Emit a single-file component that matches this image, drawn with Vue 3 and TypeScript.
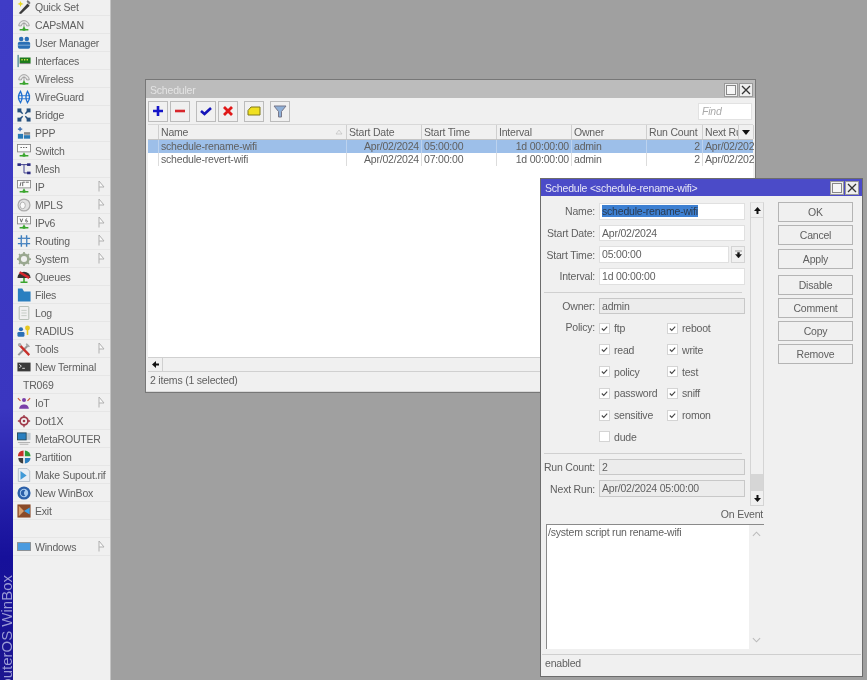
<script setup lang="ts">
interface MenuItem { label: string; icon: string; sub?: boolean; inset?: boolean }

const net = '<path d="M8 10v4M3 13.500h10" stroke="#3aa52e" stroke-width="1.600" fill="none"/><path d="M6.500 11.500h3v3h-3z" fill="#3aa52e"/>'

const icons: Record<string, string> = {
  quick: '<path d="M2 15 12 4l2.500 2.500L4.500 16z" fill="#3c3c3c"/><path d="M12 0l2 1.500 1.500 2L14 5l-3-3z" fill="#777"/><path d="M4 1l1 2.500 2.500 1L5 5.500 4 8 3 5.500.5 4.500 3 3.500z" fill="#e8d820"/>',
  caps: '<path d="M2 9a6 6 0 0 1 12 0H11a3 3 0 0 0-6 0z" fill="#e6e6e6" stroke="#9a9a9a"/><path d="M8 5v6" stroke="#9a9a9a"/>' + net,
  user: '<circle cx="4.800" cy="3.500" r="2.600" fill="#2a6fb5"/><circle cx="11.200" cy="3.500" r="2.600" fill="#2a6fb5"/><rect x="1" y="6.500" width="14" height="8" rx="2" fill="#2a6fb5"/><path d="M1 10.500h14" stroke="#8fb5dc"/>',
  ifaces: '<rect x="0.500" y="1" width="1.600" height="14" fill="#5a8f9a"/><rect x="3" y="4" width="12.500" height="6.500" fill="#1c7a1c"/><path d="M5 6.500h1.500M8 6.500h1.500M11 6.500h1.500" stroke="#d9e84a" stroke-width="1.600"/><rect x="3" y="10.500" width="12.500" height="1" fill="#777"/>',
  wg: '<path d="M4 1.500C.8 6 .8 10 4 14.500 6.500 10 6.500 6 4 1.500zM12 1.500C9.500 6 9.500 10 12 14.500 15.200 10 15.200 6 12 1.500z" fill="none" stroke="#1f6fd0" stroke-width="1.500"/><path d="M1 6.500h14M1 10h14" stroke="#1f6fd0" stroke-width="1"/>',
  bridge: '<path d="M3.500 3.500 6.500 6.500M12.500 3.500 9.500 6.500M3.500 12.500 6.500 9.500M12.500 12.500 9.500 9.500" stroke="#26507e" stroke-width="1.600"/><rect x="0.500" y="0.500" width="4.500" height="4.500" fill="#26507e"/><rect x="11" y="0.500" width="4.500" height="4.500" fill="#26507e"/><rect x="0.500" y="11" width="4.500" height="4.500" fill="#26507e"/><rect x="11" y="11" width="4.500" height="4.500" fill="#26507e"/>',
  ppp: '<path d="M3.500 1v5M1 3.500h5" stroke="#2a5fa8" stroke-width="1.300"/><rect x="1" y="9" width="6" height="5.500" fill="#2a7ab5"/><rect x="8" y="7" width="7" height="3" fill="#8a8a8a"/><rect x="8" y="10.500" width="7" height="4" fill="#2a7ab5"/>',
  sw: '<rect x="0.500" y="0.500" width="15" height="8.500" fill="#fbfbfb" stroke="#888"/><path d="M4 4h1.500M7 4h1.500M10 4h1.500" stroke="#555" stroke-width="1.200"/>' + net,
  mesh: '<rect x="0.500" y="1.500" width="4" height="3" fill="#2a2a80"/><rect x="11.500" y="1.500" width="4" height="3" fill="#2a2a80"/><rect x="11.500" y="11" width="4" height="3" fill="#2a2a80"/><path d="M4 3h8M8 3v9.500h4" stroke="#2a2a80" fill="none"/>',
  ip: '<rect x="0.500" y="0.500" width="15" height="8.500" fill="#fbfbfb" stroke="#888"/><path d="M3.500 7 4.500 2.500M6.500 2.500H9M6.500 7V2.500M10 2.500h3.500" stroke="#555"/>' + net,
  mpls: '<circle cx="8" cy="8" r="6.800" fill="#e2e2e2" stroke="#aaa" stroke-width="1.400"/><ellipse cx="6.500" cy="8.500" rx="3" ry="3.800" fill="#fafafa" stroke="#aaa"/>',
  ipv6: '<rect x="0.500" y="0.500" width="15" height="8.500" fill="#fbfbfb" stroke="#888"/><path d="M3.500 3l1.500 4L6.500 3M11.500 3C9.500 3 9.500 7 11 7s1.500-2-.5-2" stroke="#555" fill="none"/>' + net,
  routing: '<path d="M1 5h14M1 11h14M5 1.500v13M11 1.500v13" stroke="#3d7dbd" stroke-width="1.600" fill="none"/><path d="M5 5h6v6H5z" fill="#f0f0f0" stroke="#3d7dbd"/>',
  system: '<circle cx="8" cy="8" r="5" fill="none" stroke="#9aa890" stroke-width="3"/><path d="M8 0v3M8 13v3M0 8h3M13 8h3M2.300 2.300l2 2M11.700 11.700l2 2M13.700 2.300l-2 2M4.300 11.700l-2 2" stroke="#9aa890" stroke-width="2"/>',
  queues: '<path d="M0.500 9a7.500 7 0 0 1 15 0z" fill="#333"/><path d="M3 2.500l11 6.500" stroke="#d8262c" stroke-width="2.800"/><path d="M8 9v5M4 14h8" stroke="#3aa52e" stroke-width="1.800"/>',
  files: '<path d="M1 0.500h5l2 3.500h7.500v11.500H1z" fill="#2a7fc0"/>',
  log: '<rect x="2.500" y="0.500" width="11" height="15" rx="1" fill="#f0f0f0" stroke="#aab5aa"/><path d="M5 5h6M5 8h6M5 11h6" stroke="#c0c8c0"/>',
  radius: '<circle cx="4.500" cy="6" r="2.400" fill="#2a6fb5"/><rect x="0.500" y="9" width="8" height="5.500" rx="1.500" fill="#2a6fb5"/><circle cx="12" cy="4.500" r="2.800" fill="#e8c820"/><path d="M12 6v6.500" stroke="#e8c820" stroke-width="1.800"/>',
  tools: '<path d="M1.500 15 13 3.500" stroke="#999" stroke-width="2.400"/><path d="M2.500 3 14 15" stroke="#c8302a" stroke-width="2.600"/><path d="M11 1l4 4-2 1-3-3z" fill="#aaa"/><circle cx="3" cy="3" r="2" fill="#aaa"/>',
  term: '<rect x="0.500" y="3" width="15" height="10" fill="#3a3a3a"/><path d="M2.500 5l2.500 2-2.500 2M6 9.500h3" stroke="#eee" fill="none"/>',
  iot: '<circle cx="8" cy="4.500" r="2.300" fill="#7a3fa8"/><path d="M2.500 14.500c0-6.500 11-6.500 11 0z" fill="#7a3fa8"/><path d="M1 2.500 4 5.500M15 2.500 12 5.500" stroke="#c85a3a" stroke-width="1.400"/>',
  dot1x: '<circle cx="8" cy="8" r="4.500" fill="none" stroke="#a03a4a" stroke-width="2"/><circle cx="8" cy="8" r="1.500" fill="#a03a4a"/><path d="M1 8h3M12 8h3M8 1v3M8 12v3" stroke="#a03a4a" stroke-width="1.500"/>',
  meta: '<rect x="0.500" y="1" width="10" height="8" fill="#2a7fc0" stroke="#245"/><rect x="11.500" y="1" width="4" height="8" fill="#c0c8d0"/><path d="M1 12h14M3 14h10" stroke="#aaa"/>',
  part: '<path d="M7.500 0.500V7H1A7 7 0 0 1 7.500 0.500z" fill="#c8302a"/><path d="M9 0.500A6.800 6.800 0 0 1 15.500 7H9z" fill="#2f9a3a"/><path d="M7 9v6.500A6.800 6.800 0 0 1 1.500 9z" fill="#3d3d3d"/><path d="M9 9h6.500A6.800 6.800 0 0 1 9 15.500z" fill="#2a7fc0"/>',
  sup: '<path d="M1.500 0.500h10l3 3v12h-13z" fill="#e8eef4" stroke="#b0bcc6"/><path d="M4 3.500l7 5-7 5z" fill="#3f9ad8"/>',
  win: '<circle cx="8" cy="8" r="7.500" fill="#2a5fa8"/><circle cx="8" cy="8" r="4.800" fill="#a8ccf0"/><path d="M9.500 4.800a3.600 3.600 0 1 0 0 6.400 4.500 4.500 0 0 1 0-6.400z" fill="#2a5fa8"/>',
  exit: '<rect x="0.500" y="0.500" width="15" height="15" fill="#8a4a28"/><path d="M2 2l6 6-6 6" fill="#d8a070"/><path d="M14.500 4v8L8 8z" fill="#3aa0e8"/>',
  windows: '<rect x="0.500" y="3" width="15" height="9" fill="#4a9be0" stroke="#8a8a8a"/>'
}
icons.wireless = icons.caps

const menu: MenuItem[] = [
  { label: 'Quick Set', icon: 'quick' },
  { label: 'CAPsMAN', icon: 'caps' },
  { label: 'User Manager', icon: 'user' },
  { label: 'Interfaces', icon: 'ifaces' },
  { label: 'Wireless', icon: 'wireless' },
  { label: 'WireGuard', icon: 'wg' },
  { label: 'Bridge', icon: 'bridge' },
  { label: 'PPP', icon: 'ppp' },
  { label: 'Switch', icon: 'sw' },
  { label: 'Mesh', icon: 'mesh' },
  { label: 'IP', icon: 'ip', sub: true },
  { label: 'MPLS', icon: 'mpls', sub: true },
  { label: 'IPv6', icon: 'ipv6', sub: true },
  { label: 'Routing', icon: 'routing', sub: true },
  { label: 'System', icon: 'system', sub: true },
  { label: 'Queues', icon: 'queues' },
  { label: 'Files', icon: 'files' },
  { label: 'Log', icon: 'log' },
  { label: 'RADIUS', icon: 'radius' },
  { label: 'Tools', icon: 'tools', sub: true },
  { label: 'New Terminal', icon: 'term' },
  { label: 'TR069', icon: '', inset: true },
  { label: 'IoT', icon: 'iot', sub: true },
  { label: 'Dot1X', icon: 'dot1x' },
  { label: 'MetaROUTER', icon: 'meta' },
  { label: 'Partition', icon: 'part' },
  { label: 'Make Supout.rif', icon: 'sup' },
  { label: 'New WinBox', icon: 'win' },
  { label: 'Exit', icon: 'exit' },
  { label: '', icon: '' },
  { label: 'Windows', icon: 'windows', sub: true }
]

const rows = [
  { name: 'schedule-rename-wifi', time: '05:00:00', selected: true },
  { name: 'schedule-revert-wifi', time: '07:00:00', selected: false }
]

const policies = [
  { a: 'ftp', b: 'reboot', ac: true },
  { a: 'read', b: 'write', ac: true },
  { a: 'policy', b: 'test', ac: true },
  { a: 'password', b: 'sniff', ac: true },
  { a: 'sensitive', b: 'romon', ac: true },
  { a: 'dude', b: '', ac: false }
]

const actionsA = ['OK', 'Cancel', 'Apply']
const actionsB = ['Disable', 'Comment', 'Copy', 'Remove']
</script>

<template>
  <div class="screen">
    <aside class="strip"><span class="brand">RouterOS WinBox</span></aside>
    <nav class="menu">
      <div v-for="(m, i) in menu" :key="i" class="mrow">
        <svg v-if="m.icon" class="micon" viewBox="0 0 16 16" v-html="icons[m.icon]"></svg>
        <span v-else class="micon"></span>
        <span class="mlabel" :class="{ inset: m.inset }">{{ m.label }}</span>
        <svg v-if="m.sub" class="flag" viewBox="0 0 7 12"><path d="M1 11.500V1l5 6H1" fill="#fafafa" stroke="#b0b0b0" /></svg>
      </div>
    </nav>

    <section class="desk">
      <div class="win sched">
        <header class="tbar idle">
          <span>Scheduler</span>
          <span class="wbtns">
            <i class="wbtn"><b class="sq"></b></i>
            <i class="wbtn"><svg viewBox="0 0 10 10"><path d="M1 1l8 8M9 1l-8 8" stroke="#333" stroke-width="1.300" /></svg></i>
          </span>
        </header>
        <div class="tools">
          <button class="tb"><svg viewBox="0 0 14 14"><path d="M7 2v10M2 7h10" stroke="#1414c8" stroke-width="2.600" /></svg></button>
          <button class="tb"><svg viewBox="0 0 14 14"><path d="M2 7h10" stroke="#d8262c" stroke-width="2.600" /></svg></button>
          <button class="tb gap"><svg viewBox="0 0 14 14"><path d="M2 7l3.500 3L12 4" fill="none" stroke="#1414b8" stroke-width="2.600" /></svg></button>
          <button class="tb"><svg viewBox="0 0 14 14"><path d="M3 3l8 8M11 3l-8 8" stroke="#e01818" stroke-width="2.800" /></svg></button>
          <button class="tb gap"><svg viewBox="0 0 14 14"><path d="M1 11V6.500L4 3h9v8z" fill="#f0e020" stroke="#807818" /></svg></button>
          <button class="tb gap"><svg viewBox="0 0 14 14"><path d="M1 2h12L8.500 7.500V13h-3V7.500z" fill="#8fb0d8" stroke="#778" /></svg></button>
          <span class="find">Find</span>
        </div>
        <div class="table">
          <div class="trow head">
            <span class="c"></span>
            <span class="c name">Name<svg class="sort" viewBox="0 0 8 6"><path d="M4 1 7 5H1z" fill="#eee" stroke="#bbb" stroke-width=".6" /></svg></span>
            <span class="c">Start Date</span>
            <span class="c">Start Time</span>
            <span class="c">Interval</span>
            <span class="c">Owner</span>
            <span class="c">Run Count</span>
            <span class="c clip">Next Run</span>
            <span class="c drop"><svg viewBox="0 0 8 5"><path d="M0 0h8L4 5z" fill="#111" /></svg></span>
          </div>
          <div v-for="r in rows" :key="r.name" class="trow" :class="{ sel: r.selected }">
            <span class="c"></span>
            <span class="c">{{ r.name }}</span>
            <span class="c right">Apr/02/2024</span>
            <span class="c">{{ r.time }}</span>
            <span class="c right">1d 00:00:00</span>
            <span class="c">admin</span>
            <span class="c right">2</span>
            <span class="c clip span2">Apr/02/2024 05:00:00</span>
          </div>
          <div class="tfill"></div>
          <div class="hscroll">
            <span class="arrowbox"><svg viewBox="0 0 9 9"><path d="M1 4.500 5 1v2.500h3v2H5V8z" fill="#111" /></svg></span>
          </div>
        </div>
        <footer class="status">2 items (1 selected)</footer>
      </div>

      <div class="win dialog">
        <header class="tbar active">
          <span>Schedule &lt;schedule-rename-wifi&gt;</span>
          <span class="wbtns">
            <i class="wbtn"><b class="sq"></b></i>
            <i class="wbtn"><svg viewBox="0 0 10 10"><path d="M1 1l8 8M9 1l-8 8" stroke="#333" stroke-width="1.300" /></svg></i>
          </span>
        </header>
        <div class="dbody">
          <div class="dleft">
            <div class="upper">
              <div class="form">
                <label class="frow"><span class="lab">Name:</span><span class="inp"><em class="hl">schedule-rename-wifi</em></span></label>
                <label class="frow"><span class="lab">Start Date:</span><span class="inp">Apr/02/2024</span></label>
                <label class="frow"><span class="lab">Start Time:</span><span class="inp short">05:00:00</span><span class="spin"><svg viewBox="0 0 9 9"><path d="M1 1h7M4.500 8 1.500 4.500H3.500V2.500h2v2h2z" fill="#111" stroke="#111" stroke-width=".4" /></svg></span></label>
                <label class="frow"><span class="lab">Interval:</span><span class="inp">1d 00:00:00</span></label>
                <hr class="sep first" />
                <label class="frow"><span class="lab">Owner:</span><span class="inp ro">admin</span></label>
                <div class="policy">
                  <span class="lab plab">Policy:</span>
                  <div class="pgrid">
                    <template v-for="p in policies" :key="p.a">
                      <span class="chk">
                        <i class="box"><svg v-if="p.ac" viewBox="0 0 10 10"><path d="M2 5l2.200 2.200L8 3" fill="none" stroke="#444" stroke-width="1.200" /></svg></i>{{ p.a }}
                      </span>
                      <span v-if="p.b" class="chk">
                        <i class="box"><svg viewBox="0 0 10 10"><path d="M2 5l2.200 2.200L8 3" fill="none" stroke="#444" stroke-width="1.200" /></svg></i>{{ p.b }}
                      </span>
                      <span v-else></span>
                    </template>
                  </div>
                </div>
                <hr class="sep second" />
                <label class="frow"><span class="lab">Run Count:</span><span class="inp ro">2</span></label>
                <label class="frow"><span class="lab">Next Run:</span><span class="inp ro">Apr/02/2024 05:00:00</span></label>
              </div>
              <div class="vscroll">
                <span class="vend"><svg viewBox="0 0 9 9"><path d="M4.500 1 8 5H5.500v3h-2V5H1z" fill="#111" /></svg></span>
                <span class="vtrack"></span>
                <span class="vthumb"></span>
                <span class="vend bottom"><svg viewBox="0 0 9 9"><path d="M4.500 8 8 4H5.500V1h-2v3H1z" fill="#111" /></svg></span>
              </div>
            </div>
            <div class="onevent">On Event</div>
            <div class="editor">
              <div class="code">/system script run rename-wifi</div>
              <div class="edscroll">
                <svg viewBox="0 0 10 6"><path d="M1 5l4-4 4 4" fill="none" stroke="#bbb" stroke-width="1.200" /></svg>
                <svg viewBox="0 0 10 6"><path d="M1 1l4 4 4-4" fill="none" stroke="#bbb" stroke-width="1.200" /></svg>
              </div>
            </div>
          </div>
          <div class="dright">
            <div class="agroup">
              <button v-for="a in actionsA" :key="a" class="act">{{ a }}</button>
            </div>
            <div class="agroup">
              <button v-for="a in actionsB" :key="a" class="act">{{ a }}</button>
            </div>
          </div>
        </div>
        <footer class="dstatus"><span>enabled</span></footer>
      </div>
    </section>
  </div>
</template>

<style scoped>
.screen {
  width: 867px;
  height: 680px;
  display: flex;
  overflow: hidden;
  position: relative;
  background: #a0a0a0;
  font: 10.500px "Liberation Sans", Arial, sans-serif;
  letter-spacing: -0.2px;
  color: #606060;
  filter: blur(0.6px);
}
.strip {
  width: 13px;
  flex: none;
  position: relative;
  overflow: hidden;
  background: linear-gradient(180deg, #3f3cc6 0%, #3a36c0 60%, #16109a 82%, #1c1690 100%);
}
.brand {
  position: absolute;
  left: -1px;
  bottom: -18px;
  writing-mode: vertical-rl;
  transform: rotate(180deg);
  font-size: 15px;
  line-height: 15px;
  letter-spacing: 0;
  color: #9b9bd6;
  white-space: nowrap;
}
.menu {
  width: 97px;
  flex: none;
  background: #f0f0f0;
  border-right: 1px solid #c4c4c4;
  margin-top: -2px;
  height: 682px;
}
.mrow {
  height: 18px;
  box-sizing: border-box;
  border-bottom: 1px solid #e6e6e6;
  display: flex;
  align-items: center;
  padding-left: 4px;
  position: relative;
}
.micon { width: 14px; height: 14px; flex: none; }
.mlabel { margin-left: 4px; white-space: nowrap; }
.mlabel.inset { margin-left: -8px; }
.flag { position: absolute; left: 85px; top: 2px; width: 7px; height: 12px; }
.desk { flex: 1; position: relative; }

.win {
  position: absolute;
  box-sizing: border-box;
  border: 1px solid #777;
  background: #f0f0f0;
  display: flex;
  flex-direction: column;
}
.sched { left: 34px; top: 79px; width: 611px; height: 314px; }
.dialog { left: 429px; top: 178px; width: 323px; height: 499px; border-color: #6c6c6c; }
.tbar {
  height: 17px;
  flex: none;
  display: flex;
  align-items: center;
  justify-content: space-between;
  padding: 0 2px 0 4px;
}
.sched .tbar { height: 18px; padding-top: 1px; box-sizing: border-box; }
.dialog .tbar { padding-right: 3px; }
.idle { background: #bcbcbc; color: #e4e4e4; }
.active { background: #4b4bc8; color: #e6e6f6; }
.wbtns { display: flex; gap: 1px; }
.wbtn {
  width: 14px;
  height: 14px;
  box-sizing: border-box;
  background: #eee;
  border: 1px solid #999;
  display: flex;
  align-items: center;
  justify-content: center;
}
.wbtn svg { width: 10px; height: 10px; }
.sq { width: 10px; height: 10px; box-sizing: border-box; border: 1px solid #888; background: #f6f6f6; }

.tools {
  height: 26px;
  flex: none;
  display: flex;
  align-items: center;
  padding: 0 3px 0 2px;
  gap: 2px;
}
.tb {
  width: 20px;
  height: 21px;
  padding: 0;
  box-sizing: border-box;
  border: 1px solid #bcbcbc;
  background: #f0f0f0;
  display: flex;
  align-items: center;
  justify-content: center;
}
.tb svg { width: 14px; height: 14px; }
.tb.gap { margin-left: 4px; }
.find {
  margin-left: auto;
  width: 54px;
  height: 17px;
  line-height: 15px;
  box-sizing: border-box;
  padding-left: 3px;
  background: #fff;
  border: 1px solid #e2e2e2;
  font-style: italic;
  color: #aaa;
}
.table {
  flex: 1;
  display: flex;
  flex-direction: column;
  margin: 0 2px;
  background: #fff;
  min-height: 0;
}
.trow {
  display: grid;
  grid-template-columns: 11px 188px 75px 75px 75px 75px 56px 36px 15px;
  height: 13px;
  line-height: 13px;
  flex: none;
  background: #fff;
}
.trow.head {
  height: 16px;
  line-height: 14px;
  background: #f0f0f0;
  border-top: 1px solid #d8d8d8;
  border-bottom: 1px solid #c4c4c4;
  box-sizing: border-box;
}
.c {
  box-sizing: border-box;
  padding: 0 2px;
  border-right: 1px solid #dcdcdc;
  white-space: nowrap;
  overflow: hidden;
  position: relative;
}
.trow.sel { background: #9dbfe9; }
.head .c { border-right-color: #cfcfcf; }
.sel .c { border-right-color: #bcd2ee; }
.right { text-align: right; }
.clip { overflow: hidden; }
.span2 { grid-column: span 2; border-right: 0; }
.sort { position: absolute; right: 3px; top: 4px; width: 8px; height: 6px; }
.drop { display: flex; align-items: center; justify-content: center; background: #f0f0f0; }
.drop svg { width: 8px; height: 5px; }
.tfill { flex: 1; }
.hscroll {
  height: 15px;
  flex: none;
  box-sizing: border-box;
  background: #f0f0f0;
  border-top: 1px solid #d0d0d0;
  border-bottom: 1px solid #d0d0d0;
  display: flex;
}
.arrowbox {
  width: 14px;
  border-right: 1px solid #d0d0d0;
  display: flex;
  align-items: center;
  justify-content: center;
}
.arrowbox svg { width: 9px; height: 9px; }
.status {
  height: 20px;
  line-height: 17px;
  flex: none;
  box-sizing: border-box;
  padding-left: 4px;
  border-bottom: 1px solid #d8d8d8;
}

.dbody { flex: 1; display: flex; min-height: 0; }
.dleft {
  width: 223px;
  flex: none;
  display: flex;
  flex-direction: column;
  padding-top: 6px;
}
.upper { display: flex; height: 304px; flex: none; }
.form {
  width: 204px;
  flex: none;
  display: flex;
  flex-direction: column;
  gap: 5px;
  padding-top: 1px;
}
.frow { display: flex; align-items: center; height: 16.700px; flex: none; }
.lab { width: 54px; flex: none; text-align: right; margin-right: 4px; white-space: nowrap; }
.inp {
  flex: 1;
  height: 16.700px;
  line-height: 15px;
  box-sizing: border-box;
  background: #fff;
  border: 1px solid #e0e0e0;
  padding-left: 2px;
  white-space: nowrap;
  overflow: hidden;
}
.inp.short { flex: none; width: 130px; }
.inp.ro { background: #ececec; border-color: #c8c8c8; }
.hl { font-style: normal; background: #3d80d2; color: #2a3a50; }
.spin {
  width: 14px;
  height: 16.700px;
  margin-left: 2px;
  box-sizing: border-box;
  border: 1px solid #d4d4d4;
  display: flex;
  align-items: center;
  justify-content: center;
}
.spin svg { width: 9px; height: 9px; }
.sep { border: 0; border-top: 1px solid #d0d0d0; margin: 0 0 0 3px; flex: none; height: 0; width: 198px; }
.sep.first { margin-top: 2px; }
.policy { display: flex; }
.plab { height: 17px; line-height: 17px; }
.pgrid {
  display: grid;
  grid-template-columns: 68px 70px;
  grid-auto-rows: 21.700px;
  margin-top: -2px;
}
.chk { display: flex; align-items: center; gap: 4px; }
.box {
  width: 11px;
  height: 11px;
  flex: none;
  box-sizing: border-box;
  border: 1px solid #d4d4d4;
  background: #fff;
  display: flex;
}
.box svg { width: 9px; height: 9px; }
.vscroll {
  width: 14px;
  margin-left: 5px;
  box-sizing: border-box;
  border: 1px solid #d4d4d4;
  border-top-color: #e0e0e0;
  display: flex;
  flex-direction: column;
}
.vend {
  height: 14px;
  flex: none;
  display: flex;
  align-items: center;
  justify-content: center;
  border-bottom: 1px solid #d8d8d8;
}
.vend.bottom { border-bottom: 0; }
.vend svg { width: 9px; height: 9px; }
.vtrack { flex: 1; }
.vthumb { height: 17px; background: #d6d6d6; flex: none; }
.onevent { text-align: right; height: 18px; line-height: 17px; flex: none; padding-right: 1px; }
.editor {
  height: 124px;
  flex: none;
  margin-left: 5px;
  display: flex;
  background: #fff;
  border-top: 1px solid #8a8a8a;
  border-left: 1px solid #8a8a8a;
}
.code { flex: 1; padding: 1px 0 0 1px; }
.edscroll {
  width: 15px;
  background: #f0f0f0;
  display: flex;
  flex-direction: column;
  justify-content: space-between;
  align-items: center;
  padding: 6px 0 6px;
  box-sizing: border-box;
}
.edscroll svg { width: 9px; height: 6px; }
.dright {
  margin-left: 14px;
  width: 75px;
  padding-top: 6px;
  display: flex;
  flex-direction: column;
  gap: 6px;
}
.agroup { display: flex; flex-direction: column; gap: 3.300px; }
.act {
  width: 75px;
  height: 20px;
  padding: 0;
  box-sizing: border-box;
  border: 1px solid #b4b4b4;
  background: #f0f0f0;
  font: 10.500px "Liberation Sans", Arial, sans-serif;
  letter-spacing: -0.2px;
  color: #606060;
}
.dstatus {
  height: 22px;
  flex: none;
  margin: 0 1px;
  border-top: 1px solid #cfcfcf;
  box-sizing: border-box;
  padding: 0 0 0 3px;
  line-height: 17px;
}
</style>
